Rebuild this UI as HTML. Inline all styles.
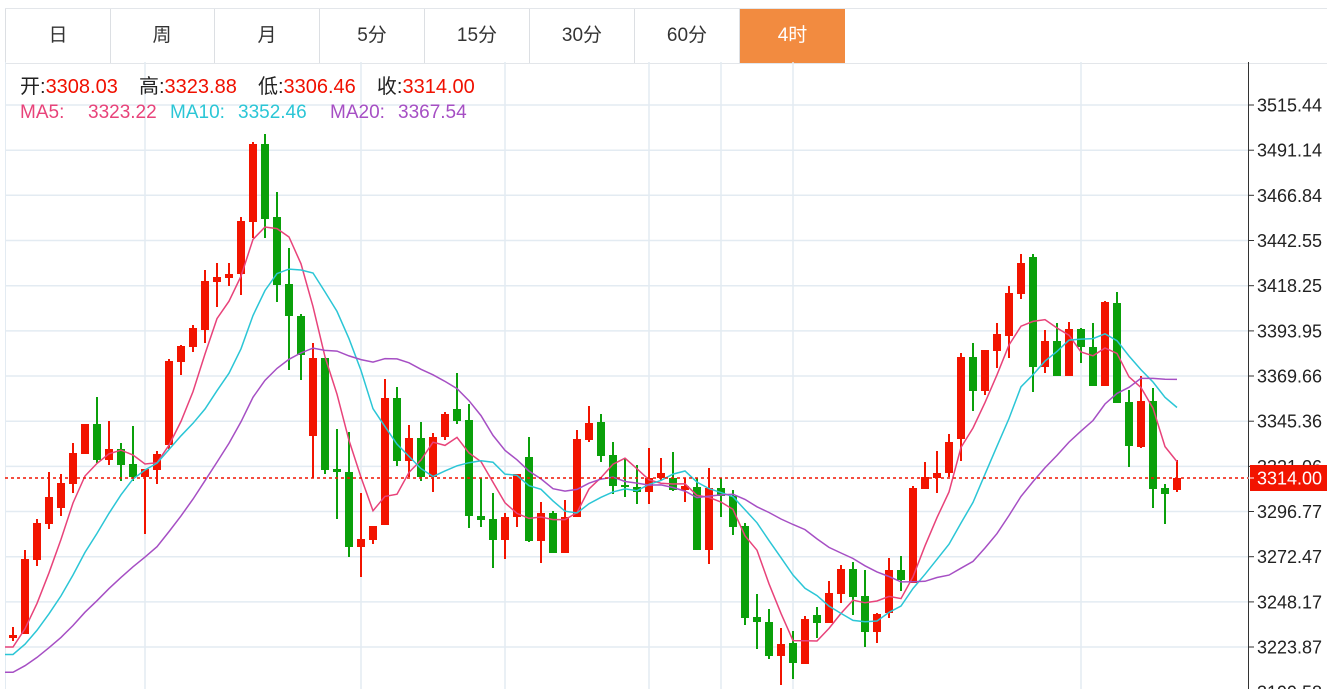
<!DOCTYPE html>
<html><head><meta charset="utf-8">
<style>
html,body{margin:0;padding:0;background:#fff;width:1327px;height:689px;overflow:hidden;font-family:"Liberation Sans","Noto Sans CJK SC",sans-serif;}
.tabs{position:absolute;left:5px;top:8px;height:54px;width:1322px;border-top:1px solid #e3e6ea;border-bottom:1px solid #e3e6ea;}
.tab{position:absolute;top:0;height:54px;width:104px;border-right:1px solid #dcdfe3;text-align:center;line-height:54px;font-size:19px;color:#333;}
.tab.on{background:#f28b40;color:#fff;border-right:none;}
.leg{position:absolute;left:20px;font-size:20px;line-height:22px;white-space:nowrap;}
.r{color:#f01000}
.leg2{font-size:19px}
.leg2 span{position:absolute;top:0}
</style></head><body>
<div class="tabs">
<div class="tab" style="left:0;border-left:1px solid #dcdfe3">日</div>
<div class="tab" style="left:105px">周</div>
<div class="tab" style="left:210px">月</div>
<div class="tab" style="left:315px">5分</div>
<div class="tab" style="left:420px">15分</div>
<div class="tab" style="left:525px">30分</div>
<div class="tab" style="left:630px">60分</div>
<div class="tab on" style="left:735px;width:105px">4时</div>
</div>
<svg id="c" width="1327" height="689" style="position:absolute;left:0;top:0" xmlns="http://www.w3.org/2000/svg"></svg>
<div class="leg" style="top:76px;color:#222;word-spacing:5px">开:<span class="r">3308.03</span>&nbsp; 高:<span class="r">3323.88</span>&nbsp; 低:<span class="r">3306.46</span>&nbsp; 收:<span class="r">3314.00</span></div>
<div class="leg leg2" style="top:102px;left:0;width:500px;height:22px">
<span style="left:20px;color:#e8437a">MA5:</span><span style="left:88px;color:#e8437a">3323.22</span>
<span style="left:170px;color:#2bc6d6">MA10:</span><span style="left:238px;color:#2bc6d6">3352.46</span>
<span style="left:330px;color:#a64fc4">MA20:</span><span style="left:398px;color:#a64fc4">3367.54</span></div>
<script>
var D=[
[635,638,627,641,'r'],[559,634,550,634,'r'],[523,560,519,566,'r'],[497,524,472,529,'r'],[483,508,474,516,'r'],[453,484,443,493,'r'],[424,454,424,454,'r'],[424,460,397,463,'g'],[449,460,421,465,'r'],[449,465,443,481,'g'],
[464,477,426,481,'g'],[469,477,469,534,'r'],[454,470,451,484,'r'],[361,445,359,449,'r'],[346,362,345,375,'r'],[328,347,325,352,'r'],[281,330,270,343,'r'],[277,282,263,307,'r'],[274,278,263,286,'r'],[221,274,217,295,'r'],
[144,222,142,238,'r'],[144,219,134,238,'g'],[217,285,192,302,'g'],[284,316,248,370,'g'],[316,355,314,380,'g'],[358,436,343,478,'r'],[358,470,358,474,'g'],[469,472,429,519,'g'],[472,547,432,557,'g'],[539,547,493,577,'r'],
[526,540,526,544,'r'],[398,525,379,525,'r'],[398,461,387,466,'g'],[438,461,425,477,'r'],[438,477,422,481,'g'],[437,477,433,492,'r'],[414,437,412,440,'r'],[409,421,373,424,'g'],[420,516,404,528,'g'],[516,520,478,527,'g'],
[519,540,493,568,'g'],[517,540,513,559,'r'],[474,517,474,527,'r'],[457,541,437,542,'g'],[513,541,502,563,'r'],[513,553,511,553,'g'],[517,553,500,553,'r'],[439,517,430,517,'r'],[423,440,406,442,'r'],[422,456,414,462,'g'],
[455,486,442,494,'g'],[485,487,458,497,'g'],[487,492,465,504,'g'],[478,492,448,504,'r'],[473,478,458,480,'r'],[478,490,452,491,'g'],[486,490,478,502,'r'],[487,550,478,550,'g'],[488,550,468,564,'r'],[488,496,478,517,'g'],
[496,527,490,535,'g'],[526,618,523,625,'g'],[617,622,594,649,'g'],[622,656,609,659,'g'],[644,656,628,685,'r'],[643,663,631,679,'g'],[619,664,616,664,'r'],[615,623,607,638,'g'],[593,623,581,623,'r'],[569,594,565,603,'r'],
[569,597,562,615,'g'],[596,632,570,647,'g'],[614,632,613,643,'r'],[570,613,558,618,'r'],[570,580,556,591,'g'],[488,583,486,583,'r'],[477,489,462,489,'r'],[473,478,451,493,'r'],[442,473,434,477,'r'],[357,439,353,461,'r'],
[357,391,343,411,'g'],[350,391,350,395,'r'],[334,351,323,368,'r'],[293,336,286,358,'r'],[263,294,254,299,'r'],[257,367,254,392,'g'],[341,367,330,373,'r'],[341,376,323,376,'g'],[329,376,322,376,'r'],[329,347,328,363,'g'],
[347,386,323,386,'g'],[302,386,301,386,'r'],[303,403,292,403,'g'],[402,446,390,467,'g'],[401,447,376,448,'r'],[401,489,388,508,'g'],[488,494,484,524,'g'],[478,490,460,492,'r']];
var s='';
for(var k=0;k<14;k++){var y=105+45.17*k;s+='<line x1="5" x2="1248" y1="'+y.toFixed(1)+'" y2="'+y.toFixed(1)+'" stroke="#e3ebf2" stroke-width="1.5"/>';}
[145,361,505,649,721,793,1081].forEach(function(x){s+='<line x1="'+x+'" x2="'+x+'" y1="62" y2="689" stroke="#e3ebf2" stroke-width="1.5"/>';});
s+='<line x1="5.5" x2="5.5" y1="62" y2="689" stroke="#e3ebf2"/>';
var closes=[];
D.forEach(function(d,i){var x=13+12*i;var col=d[4]=='r'?'#f21400':'#0aa00a';
closes.push(d[4]=='r'?d[0]:d[1]);
s+='<line x1="'+x+'" x2="'+x+'" y1="'+d[2]+'" y2="'+d[3]+'" stroke="'+col+'" stroke-width="2"/>';
s+='<rect x="'+(x-4)+'" y="'+d[0]+'" width="8" height="'+Math.max(2,d[1]-d[0])+'" fill="'+col+'"/>';});
var pad=[];for(var i=0;i<10;i++)pad.push(690);for(var i=0;i<5;i++)pad.push(662);for(var i=0;i<4;i++)pad.push(650);
var all=pad.concat(closes);
function ma(n,c){var p='';for(var i=0;i<closes.length;i++){var j=i+pad.length,t=0;for(var q=0;q<n;q++)t+=all[j-q];var v=t/n;var x=13+12*i;if(i==0)p+='M5 '+v.toFixed(1)+' L';p+=x+' '+v.toFixed(1)+' ';}
return '<path d="'+p+'" fill="none" stroke="'+c+'" stroke-width="1.5"/>';}
s+=ma(5,'#e8437a')+ma(10,'#2bc6d6')+ma(20,'#a64fc4');
s+='<line x1="5" x2="1248" y1="478" y2="478" stroke="#f21400" stroke-width="1.5" stroke-dasharray="3,3"/>';
s+='<line x1="1248.5" x2="1248.5" y1="62" y2="689" stroke="#333" stroke-width="1"/>';
var L=['3515.44','3491.14','3466.84','3442.55','3418.25','3393.95','3369.66','3345.36','3321.06','3296.77','3272.47','3248.17','3223.87','3199.58'];
L.forEach(function(t,k){var y=105+45.17*k;s+='<line x1="1248" x2="1254" y1="'+y.toFixed(1)+'" y2="'+y.toFixed(1)+'" stroke="#333"/>';
s+='<text x="1257" y="'+(y+6.5).toFixed(1)+'" font-size="18" fill="#222" font-family="Liberation Sans,sans-serif">'+t+'</text>';});
s+='<rect x="1250" y="465" width="77" height="26" fill="#f21400"/><line x1="1248" x2="1254" y1="478" y2="478" stroke="#fff"/>';
s+='<text x="1257" y="484.5" font-size="18" fill="#fff" font-family="Liberation Sans,sans-serif">3314.00</text>';
document.getElementById('c').innerHTML=s;
</script>
</body></html>
